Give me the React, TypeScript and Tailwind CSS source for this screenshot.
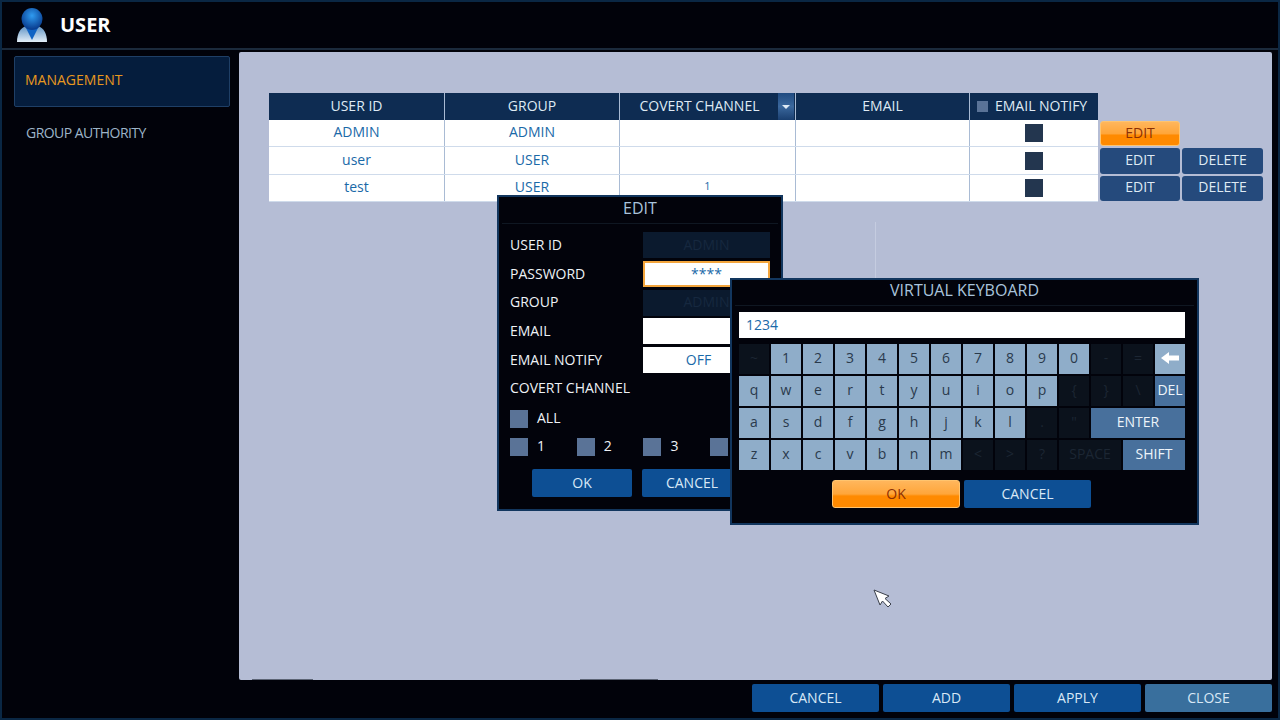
import { ReactNode } from "react";

const rows = [
  { id: "ADMIN", group: "ADMIN", covert: "", admin: true },
  { id: "user", group: "USER", covert: "", admin: false },
  { id: "test", group: "USER", covert: "1", admin: false },
];

const blueBtn = "flex items-center justify-center rounded-[2px] bg-[#0d4f94] pb-[2px] text-[14px] text-[#d8e8f6]";
const orangeBtn =
  "flex items-center justify-center rounded-[3px] border border-[#ffc46e] bg-[linear-gradient(to_bottom,#ffb65c_0%,#ffa63a_50%,#ff8a00_58%,#ff8a00_100%)] pb-[2px] text-[14px] text-[#8c2f04]";

type Key = { label: ReactNode; kind: "on" | "off" | "fn"; span?: string };

const on = (label: string): Key => ({ label, kind: "on" });
const off = (label: string, span?: string): Key => ({ label, kind: "off", span });

const keys: Key[] = [
  off("~"),
  ..."1234567890".split("").map(on),
  off("-"),
  off("="),
  {
    kind: "on",
    label: (
      <svg width="18" height="14" viewBox="0 0 18 14">
        <path d="M0 7 L8 1 V4.5 H18 V9.5 H8 V13 Z" fill="#ffffff" />
      </svg>
    ),
  },
  ..."qwertyuiop".split("").map(on),
  off("{"),
  off("}"),
  off("\\"),
  { label: "DEL", kind: "fn" },
  ..."asdfghjkl".split("").map(on),
  off("."),
  off('"'),
  { label: "ENTER", kind: "fn", span: "col-span-3" },
  ..."zxcvbnm".split("").map(on),
  off("<"),
  off(">"),
  off("?"),
  off("SPACE", "col-span-2"),
  { label: "SHIFT", kind: "fn", span: "col-span-2" },
];

function keyClass(k: Key) {
  if (k.kind === "on") return "bg-[#8fadc9] text-[#2a3a4c]";
  if (k.kind === "fn") return "bg-[#48709c] text-[#eef4fa]";
  return "bg-[#0b121c] text-[#1c2633]";
}

function Field({ label, children }: { label: string; children: ReactNode }) {
  return (
    <div className="flex h-[28.7px] items-center">
      <span className="w-[133px] pb-[2px] text-[14px] text-[#eef2f6]">{label}</span>
      {children}
    </div>
  );
}

function Check({ label }: { label: string }) {
  return (
    <div className="flex w-[66.7px] shrink-0 items-center gap-[9px]">
      <span className="h-[18px] w-[18px] shrink-0 bg-[#5a7397]" />
      <span className="pb-[2px] text-[14px] text-[#eef2f6]">{label}</span>
    </div>
  );
}

function EditDialog() {
  return (
    <div className="absolute left-[495px] top-[193px] flex h-[316px] w-[286px] flex-col border-2 border-[#12365e] bg-[#02030b] text-center">
      <div className="mx-[3px] h-[27px] border-b border-[#0f1722] text-[16px] leading-[22px] text-[#a9c3dc]">EDIT</div>
      <div className="flex flex-col px-[11px] pt-[7px] text-left">
        <Field label="USER ID">
          <div className="flex h-[26px] w-[127px] items-center justify-center bg-[#0b1a2e] pb-[2px] text-[14px] text-[#16283f]">ADMIN</div>
        </Field>
        <Field label="PASSWORD">
          <div className="flex h-[26px] w-[127px] items-center justify-center border-2 border-[#f3a53c] bg-white pb-[2px] text-[14px] text-[#1a69a8]">****</div>
        </Field>
        <Field label="GROUP">
          <div className="flex h-[26px] w-[127px] items-center justify-center bg-[#0b1a2e] pb-[2px] text-[14px] text-[#16283f]">ADMIN</div>
        </Field>
        <Field label="EMAIL">
          <div className="h-[26px] w-[127px] bg-white" />
        </Field>
        <Field label="EMAIL NOTIFY">
          <div className="flex h-[26px] w-[127px] items-center justify-center bg-white pb-[2px] pr-[16px] text-[14px] text-[#1a69a8]">OFF</div>
        </Field>
        <Field label="COVERT CHANNEL">
          <span />
        </Field>
        <div className="mt-[4px] flex">
          <Check label="ALL" />
        </div>
        <div className="mt-[5px] flex">
          <Check label="1" />
          <Check label="2" />
          <Check label="3" />
          <Check label="4" />
        </div>
        <div className="mt-[11px] flex gap-[10px] pl-[22px]">
          <div className={`${blueBtn} h-[28px] w-[100px]`}>OK</div>
          <div className={`${blueBtn} h-[28px] w-[100px]`}>CANCEL</div>
        </div>
      </div>
    </div>
  );
}

function KeyboardDialog() {
  return (
    <div className="absolute left-[728px] top-[276px] flex h-[247px] w-[469px] flex-col border-2 border-[#12365e] bg-[#02030b]">
      <div className="mx-[3px] h-[26px] border-b border-[#0f1722] text-center text-[16px] leading-[20px] text-[#a9c3dc]">VIRTUAL KEYBOARD</div>
      <div className="px-[7px] pt-[6px]">
        <div className="flex h-[26px] w-[446px] items-center bg-white pb-[2px] pl-[7px] text-[14px] text-[#1a69a8]">1234</div>
        <div className="mt-[6px] grid grid-cols-[repeat(14,30px)] auto-rows-[30px] gap-[2px]">
          {keys.map((k, i) => (
            <div key={i} className={`flex items-center justify-center pb-[3px] text-[14px] ${k.span ?? ""} ${keyClass(k)}`}>
              {k.label}
            </div>
          ))}
        </div>
        <div className="mt-[10px] flex gap-[4px] pl-[93px]">
          <div className={`${orangeBtn} h-[28px] w-[128px]`}>OK</div>
          <div className={`${blueBtn} h-[28px] w-[127px]`}>CANCEL</div>
        </div>
      </div>
    </div>
  );
}

function UserTable() {
  return (
    <div className="pl-[30px] pt-[41px]">
      <div className="flex h-[27px] w-[829px] bg-[#0e2c52] text-[14px] text-[#dfeaf4]">
        <div className="flex w-[176px] items-center justify-center border-r border-[#a9bbd4] pb-[3px]">USER ID</div>
        <div className="flex w-[175px] items-center justify-center border-r border-[#a9bbd4] pb-[3px]">GROUP</div>
        <div className="relative flex w-[176px] items-center justify-center border-r border-[#a9bbd4] pb-[3px] pr-[16px]">
          COVERT CHANNEL
          <div className="absolute right-px top-0 flex h-full w-[16px] items-center justify-center bg-gradient-to-b from-[#1f4a80] via-[#3b689d] to-[#1a3f70]">
            <span className="h-0 w-0 border-x-[4px] border-t-[4px] border-x-transparent border-t-[#dfeaf4]" />
          </div>
        </div>
        <div className="flex w-[174px] items-center justify-center border-r border-[#a9bbd4] pb-[3px]">EMAIL</div>
        <div className="flex w-[128px] items-center gap-[7px] pl-[7px]">
          <span className="h-[11px] w-[11px] bg-[#5a7397]" />
          <span className="pb-[3px]">EMAIL NOTIFY</span>
        </div>
      </div>
      {rows.map((r) => (
        <div key={r.id} className="flex h-[27.4px]">
          <div className="flex w-[829px] border-b border-[#cfdbeb] bg-white text-[14px] text-[#1a69a8]">
            <div className="flex w-[176px] items-center justify-center border-r border-[#a9bbd4] pb-[3px]">{r.id}</div>
            <div className="flex w-[175px] items-center justify-center border-r border-[#a9bbd4] pb-[3px]">{r.group}</div>
            <div className="flex w-[176px] items-center justify-center border-r border-[#a9bbd4] pb-[3px] text-[11px]">{r.covert}</div>
            <div className="w-[174px] border-r border-[#a9bbd4]" />
            <div className="flex w-[128px] items-center justify-center pr-[1px]">
              <span className="h-[18px] w-[18px] bg-[#23364f]" />
            </div>
          </div>
          <div className="ml-[2px] flex gap-[2px] py-px text-[14px]">
            {r.admin ? (
              <div className={`${orangeBtn} w-[80px]`}>EDIT</div>
            ) : (
              <>
                <div className="flex w-[80px] items-center justify-center rounded-[3px] bg-[#254a7c] pb-[3px] text-[#dfeaf4]">EDIT</div>
                <div className="flex w-[81px] items-center justify-center rounded-[3px] bg-[#254a7c] pb-[3px] text-[#dfeaf4]">DELETE</div>
              </>
            )}
          </div>
        </div>
      ))}
    </div>
  );
}

export default function App() {
  return (
    <div className="relative flex h-[720px] w-[1280px] flex-col overflow-hidden border-2 border-[#0a2744] bg-[#01020a] font-['Open_Sans',sans-serif]">
      <header className="flex h-[48px] shrink-0 items-center border-b-2 border-[#1b2a3c] pl-[15px]">
        <svg width="30" height="35" viewBox="0 0 30 35" className="mb-[-1px]">
          <defs>
            <radialGradient id="head" cx="50%" cy="35%" r="60%">
              <stop offset="0%" stopColor="#2f9bf0" />
              <stop offset="100%" stopColor="#0a3f92" />
            </radialGradient>
            <linearGradient id="shoulder" x1="0" y1="0" x2="0" y2="1">
              <stop offset="0%" stopColor="#5f93c4" />
              <stop offset="100%" stopColor="#e3eef8" />
            </linearGradient>
          </defs>
          <path d="M0 34 C0 26 3 20 9 18 L21 18 C27 20 30 26 30 34 Z" fill="url(#shoulder)" />
          <path d="M8 18 L15 32 L22 18 Z" fill="#0f63c4" />
          <ellipse cx="15" cy="11" rx="10.5" ry="11" fill="url(#head)" />
        </svg>
        <span className="ml-[13px] text-[20px] font-bold text-white">USER</span>
      </header>

      <div className="flex min-h-0 flex-1">
        <aside className="w-[237px] shrink-0 pl-[12px] pt-[6px]">
          <div className="flex h-[51px] w-[216px] items-center rounded-[2px] border border-[#1f3f66] bg-[#051d3d] pb-[4px] pl-[10px] text-[14px] text-[#e8981f]">
            MANAGEMENT
          </div>
          <div className="mt-[15px] pl-[12px] text-[14px] tracking-[-0.55px] text-[#9db4c8]">GROUP AUTHORITY</div>
        </aside>

        <div className="flex min-w-0 flex-1 flex-col">
          <main className="relative mr-[6px] mt-[2px] h-[628px] rounded-[2px] bg-[#b5bdd5]">
            <UserTable />
            <span className="absolute left-[636px] top-[170px] h-[56px] w-px bg-[#c5cce0]" />
            <span className="absolute bottom-0 left-[13px] h-px w-[61px] bg-[#5c6475]" />
            <span className="absolute bottom-0 left-[341px] h-px w-[78px] bg-[#5c6475]" />
          </main>
          <footer className="mr-[6px] mt-[4px] flex justify-end gap-[4px]">
            <div className={`${blueBtn} h-[28px] w-[127px]`}>CANCEL</div>
            <div className={`${blueBtn} h-[28px] w-[127px]`}>ADD</div>
            <div className={`${blueBtn} h-[28px] w-[127px]`}>APPLY</div>
            <div className="flex h-[28px] w-[127px] items-center justify-center rounded-[2px] bg-[#396f9d] pb-[2px] text-[14px] text-[#d8e8f6]">CLOSE</div>
          </footer>
        </div>
      </div>

      <EditDialog />
      <KeyboardDialog />

      <svg width="20" height="20" viewBox="0 0 20 20" className="absolute left-[871px] top-[587px]">
        <path d="M1 1 L16 7 L12 9.5 L18 15 L15 18 L9.5 12 L7 16 Z" fill="#ffffff" stroke="#3a3f4a" strokeWidth="1" />
      </svg>
    </div>
  );
}
